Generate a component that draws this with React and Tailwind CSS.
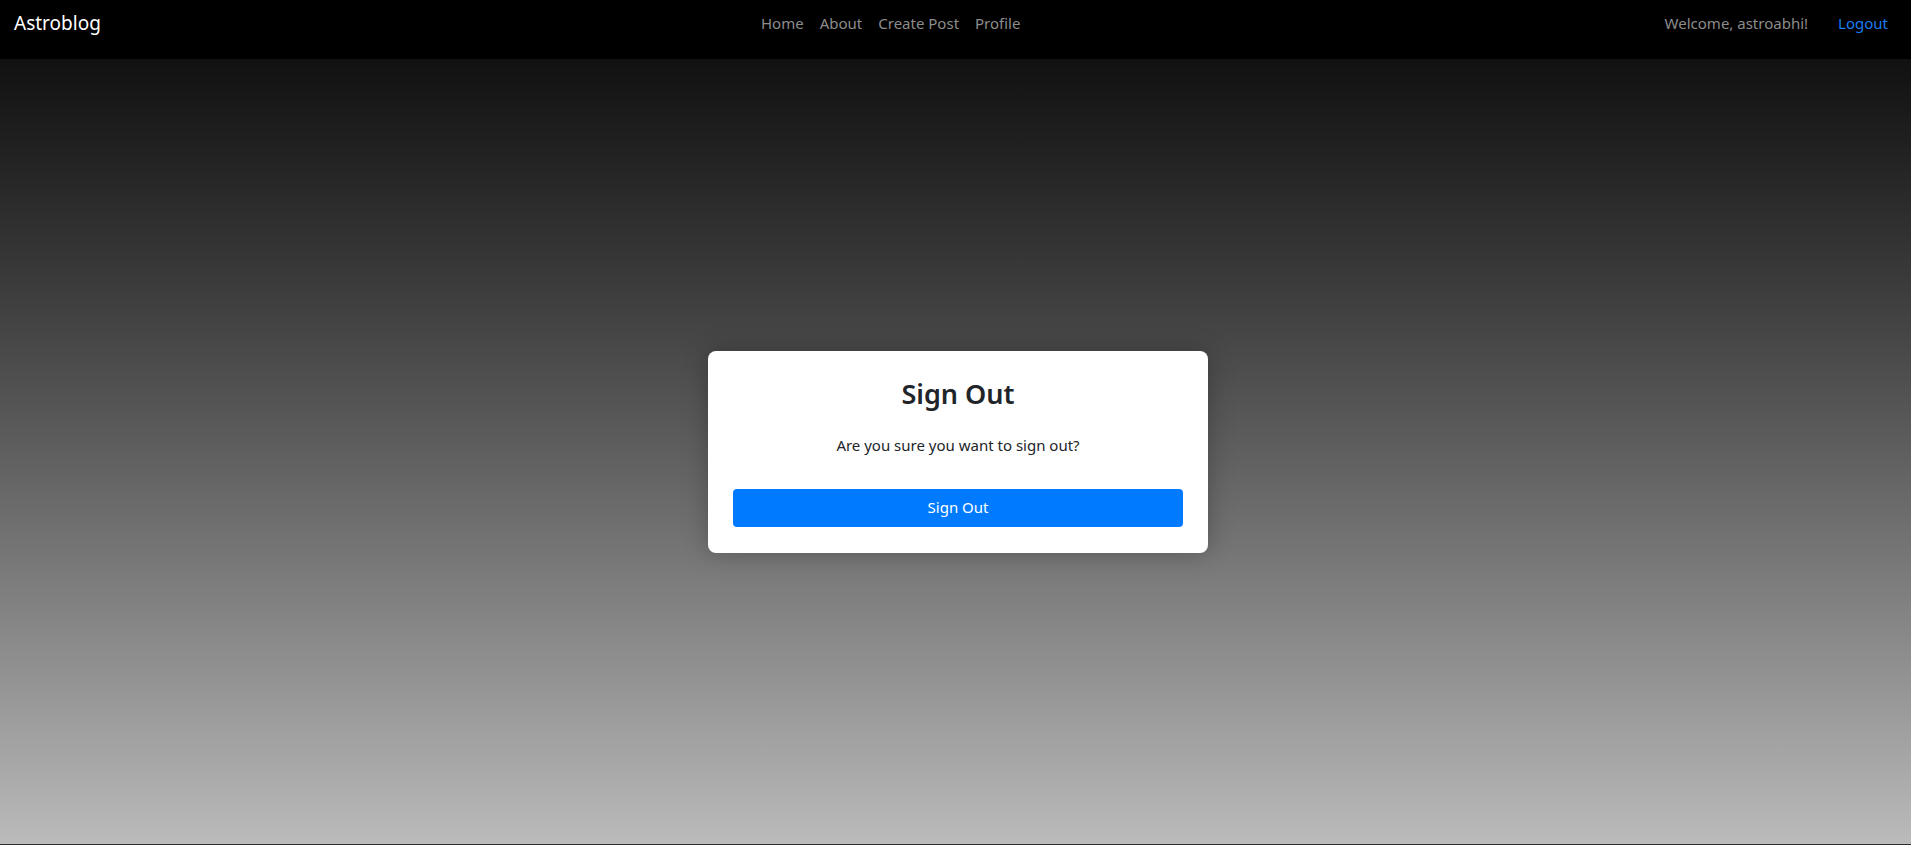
import React from "react";

export default function App() {
  return (
    <div className="flex h-[845px] w-full flex-col overflow-hidden" style={{ fontFamily: '"Noto Sans", "Open Sans", sans-serif' }}>
      <nav className="flex h-[59px] shrink-0 items-start bg-black px-[14px] pt-[11px]">
        <div className="flex w-full items-center">
          <a className="mr-[16px] text-[19px] leading-[24px] text-white">Astroblog</a>
          <ul className="mx-auto flex items-center text-[15px] leading-[24px] text-[#8c8c8c]">
            <li className="px-[8px]">Home</li>
            <li className="px-[8px]">About</li>
            <li className="px-[8px]">Create Post</li>
            <li className="px-[8px]">Profile</li>
          </ul>
          <div className="flex items-center text-[15px] leading-[24px]">
            <span className="text-[#8c8c8c]">Welcome, astroabhi!</span>
            <span className="ml-[30px] mr-[9px] text-[#1a7cf0]">Logout</span>
          </div>
        </div>
      </nav>
      <main className="flex flex-1 items-center justify-center bg-gradient-to-b from-[#111111] to-[#bbbbbb]">
        <div className="ml-[5px] w-[500px] rounded-[8px] bg-white px-[25px] pb-[26px] pt-[26px] text-center shadow-[0_0_25px_rgba(0,0,0,0.25)]">
          <h2 className="text-[27px] font-semibold leading-[34px] text-[#212529]">Sign Out</h2>
          <p className="mt-[22px] text-[15px] leading-[24px] text-[#212529]">Are you sure you want to sign out?</p>
          <button className="mt-[32px] h-[38px] w-full rounded-[4px] bg-[#007bff] text-[15px] text-white">Sign Out</button>
        </div>
      </main>
      <div className="h-[1px] shrink-0 bg-[#2a2f33]" />
    </div>
  );
}
